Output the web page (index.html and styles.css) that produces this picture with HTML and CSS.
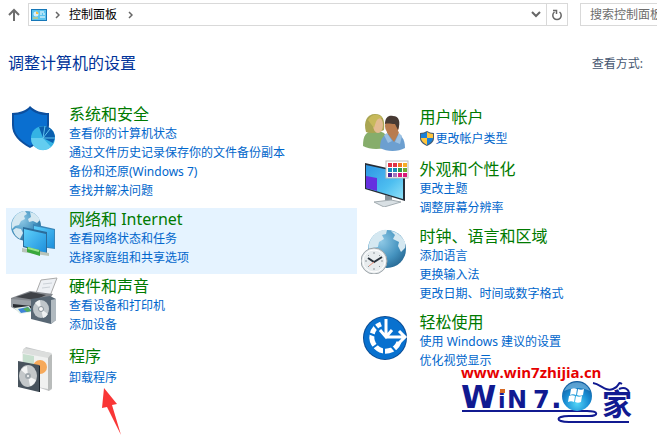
FILE: index.html
```html
<!DOCTYPE html>
<html lang="zh-CN">
<head>
    <meta charset="UTF-8">
    <meta name="viewport" content="width=device-width, initial-scale=1.0">
    <title>控制面板</title>
    <link rel="stylesheet" href="styles.css">
</head>
<body>
    <header class="toolbar">
        <button class="up" aria-label="向上">
            <svg width="14" height="14" viewBox="0 0 14 14" fill="none" stroke="#6d6d6d" stroke-width="2"><path d="M7 13V2M2 7l5-5 5 5"/></svg>
        </button>
        <nav class="address">
            <svg class="cp-icon" width="16" height="12" viewBox="0 0 16 12">
                <rect width="16" height="12" fill="#1677b8"/>
                <rect x="1" y="1" width="14" height="10" fill="#5cc4ee"/>
                <circle cx="5" cy="5" r="2.500" fill="#d8effa"/>
                <path d="M5 5V2.500A2.500 2.500 0 0 1 7.500 5z" fill="#f5c04a"/>
                <path d="M9 3h4M9 5h2M12 5h2M9 8h5" stroke="#fff"/>
                <path d="M2 9h5" stroke="#f5d04a"/>
            </svg>
            <svg class="chevron" width="5" height="8" viewBox="0 0 5 8"><path d="M1 1l3 3-3 3"/></svg>
            <a class="crumb" href="#">控制面板</a>
            <svg class="chevron" width="5" height="8" viewBox="0 0 5 8"><path d="M1 1l3 3-3 3"/></svg>
            <button class="drop" aria-label="以前的位置">
                <svg width="10" height="7" viewBox="0 0 10 7" fill="none" stroke="#666" stroke-width="2"><path d="M1 1l4 4 4-4"/></svg>
            </button>
            <button class="refresh" aria-label="刷新">
                <svg width="12" height="12" viewBox="0 0 12 12" fill="none" stroke="#666" stroke-width="1.500"><path d="M3.500 3A4.200 4.200 0 1 0 8.500 3M2 1.500h3.500V5"/></svg>
            </button>
        </nav>
        <input class="search" type="text" placeholder="搜索控制面板" aria-label="搜索控制面板">
    </header>

    <div class="title-row">
        <h1>调整计算机的设置</h1>
        <span class="view-by">查看方式:</span>
    </div>

    <main class="categories">
        <div class="column">
            <section class="category">
                <svg class="icon" viewBox="0 0 48 48">
                    <path d="M2 9C10 9 17 6 20 2c5 5 12 7 19 7v12c0 10-8 17-19 23C9 38 2 31 2 21z" fill="#0c4f9e"/>
                    <path d="M4 11c7 0 13-3 16-6 5 4 10 6 17 6v10c0 9-7 15-17 21C10 36 4 30 4 21z" fill="#0a6fd0"/>
                    <circle cx="33" cy="34" r="12" fill="#34b3e4"/>
                    <path d="M21 34a12 12 0 0 0 20 9l-8-9z" fill="#63cdf0"/>
                    <path d="M33 34l-4-11c8-3 16 2 16 11l-2 5z" fill="#0b5fae"/>
                    <path d="M33 34l2-12M33 34l12 0M33 34l7-9" stroke="#5fc5ee"/>
                </svg>
                <div class="body">
                    <h2><a href="#">系统和安全</a></h2>
                    <a href="#">查看你的计算机状态</a>
                    <a href="#">通过文件历史记录保存你的文件备份副本</a>
                    <a href="#">备份和还原(Windows 7)</a>
                    <a href="#">查找并解决问题</a>
                </div>
            </section>

            <section class="category active">
                <svg class="icon" viewBox="0 0 48 48">
                    <defs>
                        <radialGradient id="globe" cx=".35" cy=".3" r=".8"><stop offset="0" stop-color="#8fc9e6"/><stop offset=".6" stop-color="#4593bf"/><stop offset="1" stop-color="#24648f"/></radialGradient>
                        <linearGradient id="screen" x1="0" y1="0" x2="1" y2="1"><stop offset="0" stop-color="#5fd0fa"/><stop offset="1" stop-color="#1d8fdc"/></linearGradient>
                    </defs>
                    <circle cx="16" cy="17" r="15" fill="url(#globe)"/>
                    <path d="M4 9c3-5 8-7 11-7l2 3-3 2 1 3-4 2-2 4-4 1-3 3C1 16 2 12 4 9zM20 3c5 1 8 4 10 8l-3 3-4-2-4 1-1-3 3-2zM6 19l5 1 2 4-3 6c-4-2-6-5-7-9z" fill="#d5e8f1"/>
                    <path d="M23 15l22 5v20l-22-3z" fill="#3a86b8"/>
                    <path d="M24 17l20 4v18l-20-3z" fill="url(#screen)"/>
                    <path d="M13 18l24 5v22l-24-7z" fill="#2b6c9b"/>
                    <path d="M14 20l22 5v19l-22-7z" fill="url(#screen)"/>
                    <path d="M12 39l27 5v3l-27-4z" fill="#b9c4ba"/>
                    <path d="M17 38l13 3v6l-13-4z" fill="#39a83c"/>
                    <path d="M18 39l11 3" stroke="#98e28a" stroke-width="2"/>
                </svg>
                <div class="body">
                    <h2><a href="#">网络和 Internet</a></h2>
                    <a href="#">查看网络状态和任务</a>
                    <a href="#">选择家庭组和共享选项</a>
                </div>
            </section>

            <section class="category">
                <svg class="icon" viewBox="0 0 48 48">
                    <path d="M26 17l5-13 16-2-7 18z" fill="#edf0f4" stroke="#aaa"/>
                    <path d="M33 8l9-1M32 12l8-1" stroke="#cbd1d7"/>
                    <path d="M1 22l19-7 23 3-9 13-33-3z" fill="#85898f"/>
                    <path d="M6 21l15-5 15 3-11 5z" fill="#3f4247"/>
                    <path d="M1 23v8l9 5 24-1V26z" fill="#9aa0a6"/>
                    <path d="M3 28l19 2v4H10l-7-3z" fill="#292d32"/>
                    <path d="M4 32l15-2 4 6-13 2z" fill="#e4f0e9"/>
                    <path d="M8 33l10-2 4 4-11 2z" fill="#3f83d8"/>
                    <path d="M13 33l5-2 3 4-4 1z" fill="#55ad60"/>
                    <path d="M21 23l19-3 6 3v21l-5 4-20-5z" fill="#586774"/>
                    <path d="M41 24l5-1v21l-5 4z" fill="#b0b9bf"/>
                    <ellipse cx="31" cy="33" rx="8" ry="9" fill="#bfc6ca"/>
                    <path d="M31 33l-6-6a8 9 0 0 1 5-3zM31 33l7 5a8 9 0 0 1-5 4z" fill="#eef1f2"/>
                    <circle cx="31" cy="33" r="2.500" fill="#f7f7f7" stroke="#87929a"/>
                </svg>
                <div class="body">
                    <h2><a href="#">硬件和声音</a></h2>
                    <a href="#">查看设备和打印机</a>
                    <a href="#">添加设备</a>
                </div>
            </section>

            <section class="category programs">
                <svg class="icon" viewBox="0 0 48 48">
                    <path d="M13 4l3-3 24 6 2 3v33l-3 2-27-9z" fill="#c5c7c8"/>
                    <path d="M12 6l26 5v32l-26-5z" fill="#f0f1f0"/>
                    <path d="M38 11l4-3v34l-4 3z" fill="#b9bcbb"/>
                    <path d="M14 2l-2 5 26 5 4-5z" fill="#dcdedd"/>
                    <path d="M13 8l11 2v13H13z" fill="#c7dfce"/>
                    <circle cx="30" cy="21" r="7" fill="#f6a95a"/>
                    <path d="M8 15l21 4v27L8 41z" fill="#48535d"/>
                    <path d="M29 19l1 1v26h-1z" fill="#1c252d"/>
                    <ellipse cx="18" cy="30" rx="9" ry="11" fill="#c4c8ca"/>
                    <path d="M18 30l-7-6a9 10 0 0 1 6-4zM18 30l8 4a9 10 0 0 1-6 6z" fill="#f4f5f5"/>
                    <circle cx="18" cy="30" r="3" fill="#a0a8ad"/>
                    <circle cx="18" cy="30" r="1" fill="#fff"/>
                </svg>
                <div class="body">
                    <h2><a href="#">程序</a></h2>
                    <a href="#">卸载程序</a>
                    <svg class="pointer" width="22" height="48" viewBox="0 0 22 48"><path d="M3 0l13 16-5 1 9 30L6 19l-5 1z" fill="#f93636"/></svg>
                </div>
            </section>
        </div>

        <div class="column right">
            <section class="category accounts">
                <svg class="icon" viewBox="0 0 48 48">
                    <path d="M2 39c0-11 3-15 12-15s14 4 15 15c-8 4-20 4-27 0z" fill="#86ad6b"/>
                    <path d="M5 25C2 15 6 7 14 7s10 6 9 16c-5 3-13 4-18 2z" fill="#a9a552"/>
                    <ellipse cx="17" cy="18" rx="5" ry="8" fill="#e3bb91"/>
                    <path d="M7 13c3-6 11-7 14-2-6 0-6 4-8 10z" fill="#c7b95b"/>
                    <path d="M19 41c0-11 5-15 13-15s12 6 12 15c-7 4-18 4-25 0z" fill="#6c9fd0"/>
                    <path d="M26 26l7 9 5-9-2-5h-8z" fill="#b87d50"/>
                    <ellipse cx="31" cy="19" rx="7" ry="9" fill="#b97b4e"/>
                    <path d="M24 17c0-7 4-9 8-8 6 0 8 6 5 14l-3-6c-4 0-7-1-10 0z" fill="#473a33"/>
                    <path d="M26 26l5 8-4 2-4-8zM38 26l-4 9 5 2 2-8z" fill="#9bc1e3"/>
                </svg>
                <div class="body">
                    <h2><a href="#">用户帐户</a></h2>
                    <a class="with-shield" href="#"><svg width="14" height="15" viewBox="0 0 14 15">
                        <path d="M0 2c3 0 5-1 7-2 2 1 4 2 7 2v5c0 4-3 6-7 8-4-2-7-4-7-8z" fill="#465b70"/>
                        <path d="M7 1v6H1V3c2 0 4-1 6-2zM13 7c0 3-3 5-6 7V7z" fill="#1980d8"/>
                        <path d="M7 1c2 1 4 2 6 2v4H7zM1 7h6v7C4 12 1 10 1 7z" fill="#ffc53d"/>
                    </svg>更改帐户类型</a>
                </div>
            </section>

            <section class="category">
                <svg class="icon" viewBox="0 0 48 48">
                    <defs><linearGradient id="display" x1="0" y1="0" x2="1" y2="1"><stop offset="0" stop-color="#2d95e4"/><stop offset=".6" stop-color="#4dbef0"/><stop offset="1" stop-color="#91e2f8"/></linearGradient></defs>
                    <path d="M24 36l7 2v6h-7z" fill="#89959c"/>
                    <path d="M13 43l17-2 10 2-17 5z" fill="#d9e0e4" stroke="#a3acb1"/>
                    <path d="M4 4l40 9v29L4 30z" fill="#252c36"/>
                    <path d="M5 6l37 8v26L5 29z" fill="url(#display)"/>
                    <path d="M5 17l11 2v13L5 29z" fill="#6530df"/>
                    <rect x="25" y="2" width="22" height="17" fill="#fff" stroke="#bbb"/>
                    <path d="M27 4h4v4h-4zM32 4h4v4h-4z" fill="#df3346"/>
                    <path d="M37 4h4v4h-4z" fill="#f17a21"/><path d="M42 4h4v4h-4z" fill="#f6ad24"/>
                    <path d="M27 9h4v4h-4zM32 9h4v4h-4z" fill="#168cbb"/>
                    <path d="M37 9h4v4h-4z" fill="#29994e"/><path d="M42 9h4v4h-4z" fill="#72aa35"/>
                    <path d="M27 14h4v4h-4z" fill="#4a2595"/><path d="M32 14h4v4h-4z" fill="#a172bd"/>
                    <path d="M37 14h4v4h-4zM42 14h4v4h-4z" fill="#d91778"/>
                </svg>
                <div class="body">
                    <h2><a href="#">外观和个性化</a></h2>
                    <a href="#">更改主题</a>
                    <a href="#">调整屏幕分辨率</a>
                </div>
            </section>

            <section class="category">
                <svg class="icon" viewBox="0 0 48 48">
                    <circle cx="26" cy="23" r="19" fill="url(#globe)"/>
                    <path d="M9 15C13 7 20 3 26 4l-1 4-4 1 2 4-5 3-1 5-5 1-4 3c-1-4 0-7 1-10zM30 5c6 1 11 5 14 11v6l-4 4-3-6 1-4-6-3 2-4z" fill="#d5e8f1"/>
                    <circle cx="13" cy="35" r="13" fill="#e8ecee" stroke="#9ba3a8"/>
                    <circle cx="13" cy="35" r="11" fill="none" stroke="#fff"/>
                    <path d="M13 26v2M13 42v2M4 35h2M20 35h2M7 29l1 1M18 40l1 1M7 41l1-1M18 30l1-1" stroke="#8e969b"/>
                    <path d="M7 32l6 4 8-5" stroke="#28313a" stroke-width="2" fill="none"/>
                    <path d="M13 36l-5 4" stroke="#e5917c"/>
                </svg>
                <div class="body">
                    <h2><a href="#">时钟、语言和区域</a></h2>
                    <a href="#">添加语言</a>
                    <a href="#">更换输入法</a>
                    <a href="#">更改日期、时间或数字格式</a>
                </div>
            </section>

            <section class="category">
                <svg class="icon" viewBox="0 0 48 48">
                    <circle cx="24" cy="26" r="22" fill="#0a4c94"/>
                    <circle cx="24" cy="26" r="21" fill="#0871cf"/>
                    <path d="M20 12A14 14 0 1 0 38 30" fill="none" stroke="#fff" stroke-width="5"/>
                    <path d="M7 21l8 3M10 37l7-5M23 45v-9M30 34l6 7M13 13l5 6" stroke="#0871cf" stroke-width="2"/>
                    <path d="M25 7v17M19 18l6 7 6-7M25 25h19M38 19l6 6-6 6" fill="none" stroke="#fff" stroke-width="3"/>
                </svg>
                <div class="body">
                    <h2><a href="#">轻松使用</a></h2>
                    <a href="#">使用 Windows 建议的设置</a>
                    <a href="#">优化视觉显示</a>
                </div>
            </section>
        </div>
    </main>

    <aside class="watermark">
        <div class="site">www.win7zhijia.cn</div>
        <svg width="176" height="44" viewBox="0 0 176 44">
            <defs><radialGradient id="orb" cx=".5" cy=".75" r=".75"><stop offset="0" stop-color="#52d5f7"/><stop offset=".55" stop-color="#188bd2"/><stop offset="1" stop-color="#105799"/></radialGradient></defs>
            <g class="logo-text">
                <text x="0" y="27" font-size="32">W</text>
                <text x="37" y="27" font-size="22">i</text>
                <text x="46" y="27" font-size="24">N</text>
                <text x="72" y="27" font-size="24">7</text>
                <text x="90" y="27" font-size="28">.</text>
                <text class="jia" x="141" y="34" font-size="30">家</text>
            </g>
            <rect x="39" y="8" width="5" height="4" fill="#d76b25"/>
            <path d="M1 30h60" stroke="#111a91" stroke-width="2"/>
            <path d="M60 30h66c12 0 12 5 2 5h-20c-14 0-14 6 0 6h60" fill="none" stroke="#111a91" stroke-width="2"/>
            <path d="M132 2c8 1 12 9 20 6 8-3 4-8 9-5M158 8c5-2 8-1 10 3" fill="none" stroke="#111a91" stroke-width="2"/>
            <circle cx="116" cy="15" r="15" fill="url(#orb)"/>
            <path d="M103 10a14 14 0 0 1 26 0c-8-4-17-4-26 0z" fill="#8bc7e9" opacity=".6"/>
            <path d="M110 8c2-1 4-1 6 0l-1 6c-2-1-4-1-6 0zM117 8c2 1 4 1 6 0l-1 6c-2 1-4 1-6 0zM108 15c2-1 4-1 6 0l-1 6c-2-1-4-1-6 0zM115 15c2 1 4 1 6 0l-1 6c-2 1-4 1-6 0z" fill="#fff"/>
        </svg>
    </aside>
</body>
</html>
```
FILE: styles.css
```css
* {
    box-sizing: border-box;
}
body {
    margin: 0;
    min-height: 100vh;
    position: relative;
    overflow-x: hidden;
    background-color: #fff;
    font-family: "Noto Sans", "Noto Sans CJK SC", sans-serif;
    font-size: 12px;
    color: #000;
}
a {
    text-decoration: none;
}
a:hover {
    text-decoration: underline;
}
button {
    display: flex;
    align-items: center;
    justify-content: center;
    padding: 0;
    border: none;
    background: none;
}
svg {
    display: block;
    flex-shrink: 0;
}

/* address bar */
.toolbar {
    display: flex;
    padding-top: 3px;
    overflow: hidden;
}
.up {
    width: 28px;
}
.address {
    flex: 1;
    display: flex;
    align-items: center;
    height: 23px;
    margin-right: 12px;
    padding-left: 2px;
    border: 1px solid #d9d9d9;
}
.cp-icon {
    margin-right: 8px;
}
.chevron {
    fill: none;
    stroke: #666;
    stroke-width: 1.5;
}
.crumb {
    margin: 0 11px 0 9px;
    color: #000;
    line-height: 20px;
}
.drop {
    width: 20px;
    height: 100%;
    margin-left: auto;
}
.refresh {
    width: 21px;
    height: 100%;
    border-left: 1px solid #d9d9d9;
}
.search {
    width: 100px;
    height: 23px;
    margin-right: -23px;
    padding: 0 9px;
    border: 1px solid #d9d9d9;
    font: inherit;
}
.search::placeholder {
    color: #6d6d6d;
}

.title-row {
    display: flex;
    align-items: center;
    justify-content: space-between;
    margin-top: 25px;
    padding: 0 14px 0 8px;
}
h1 {
    margin: 0;
    font-size: 16px;
    font-weight: normal;
    line-height: 24px;
    color: #003399;
}
.view-by {
    color: #45566f;
}

/* categories */
.categories {
    display: grid;
    grid-template-columns: 7fr 6fr;
    margin-top: 28px;
    padding-left: 6px;
}
.column {
    display: flex;
    flex-direction: column;
    gap: 1px;
}
.right {
    padding-top: 3px;
}
.category {
    display: flex;
    gap: 11px;
    padding: 1px 0 7px 4px;
}
.active {
    background-color: #e5f3ff;
}
.icon {
    width: 48px;
    height: 48px;
}
.body {
    position: relative;
    display: flex;
    flex-direction: column;
    align-items: flex-start;
}
.body a {
    line-height: 19px;
    color: #0066cc;
}
.body h2 {
    margin: 0;
    font-size: 16px;
    font-weight: normal;
    line-height: 20px;
}
.body h2 a {
    line-height: 20px;
    color: #007a00;
}
.programs {
    padding-top: 4px;
}
.accounts {
    padding-bottom: 2px;
}
.programs h2,
.accounts h2 {
    margin-bottom: 2px;
}
.body .with-shield {
    display: flex;
    align-items: center;
    gap: 2px;
}
.pointer {
    position: absolute;
    top: 42px;
    left: 32px;
}

/* site mark, lies over the lower right corner */
.watermark {
    position: absolute;
    right: 20px;
    bottom: 16px;
}
.watermark svg {
    overflow: visible;
}
.site {
    font-family: "Open Sans", sans-serif;
    font-size: 15px;
    font-weight: bold;
    line-height: 18px;
    color: #e60000;
}
.logo-text {
    font-family: "DejaVu Sans", sans-serif;
    font-weight: bold;
    fill: #111a91;
}
.logo-text .jia {
    font-family: "Noto Sans CJK SC", sans-serif;
}
```
